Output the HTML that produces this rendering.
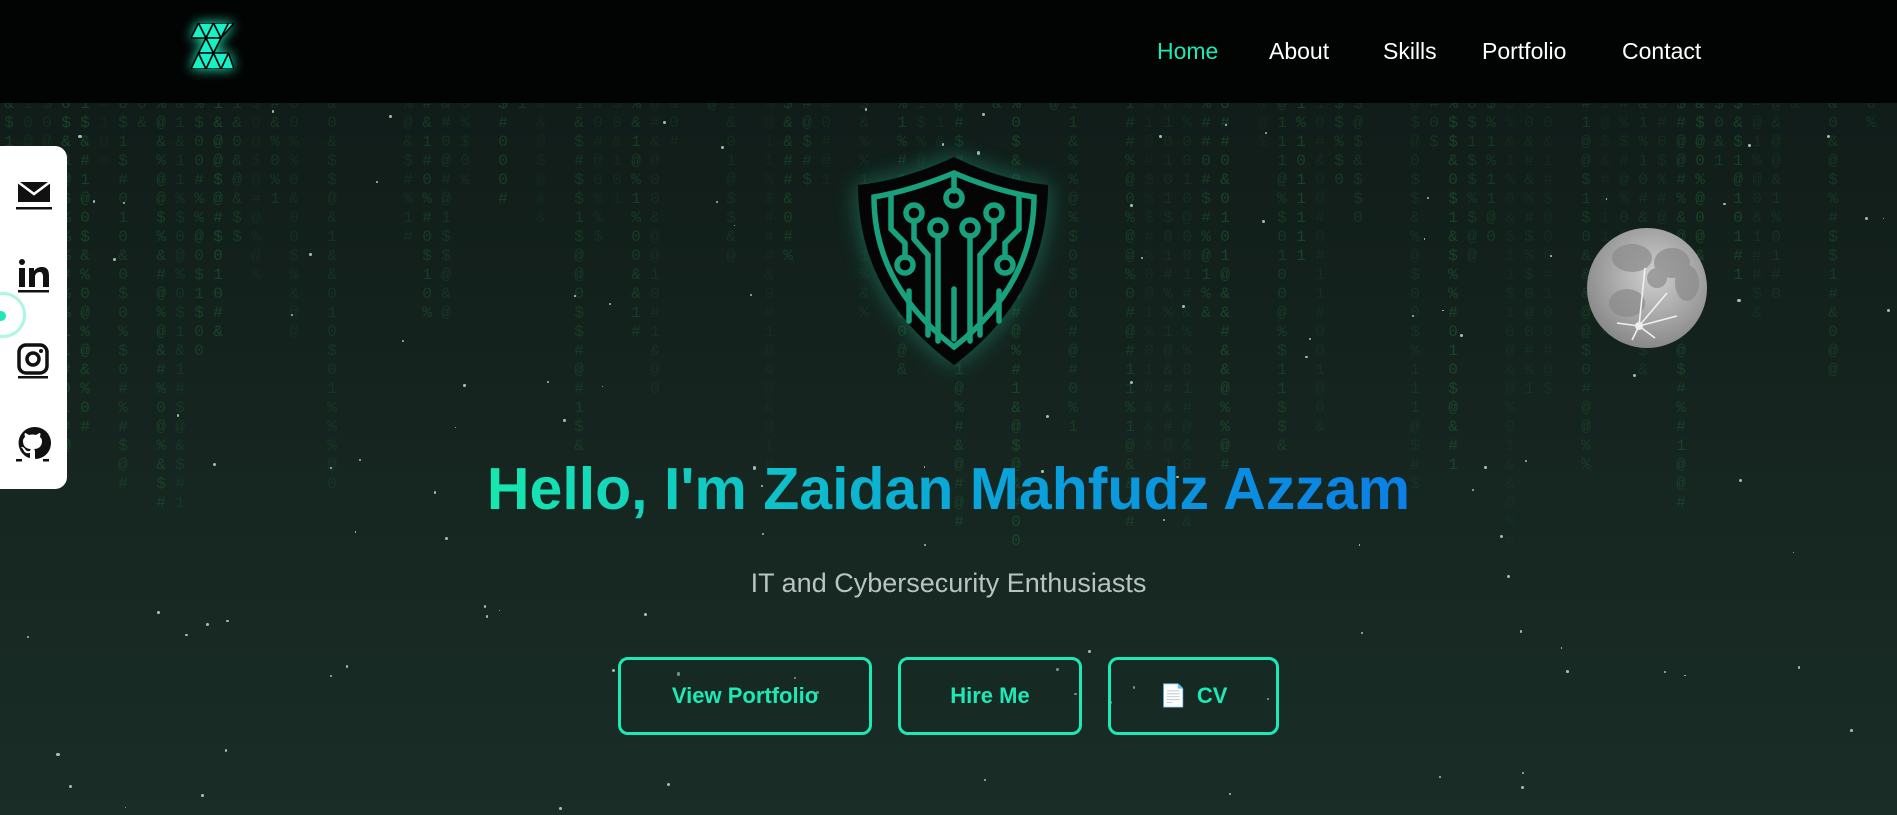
<!DOCTYPE html>
<html><head><meta charset="utf-8">
<style>
*{margin:0;padding:0;box-sizing:border-box}
html,body{width:1897px;height:815px;overflow:hidden}
body{background:linear-gradient(180deg,#0f1a17 0%,#15241f 50%,#1a2d27 100%);font-family:"Liberation Sans",sans-serif;position:relative}
#mx{position:absolute;left:0;top:0;width:1897px;height:815px;overflow:hidden;font-family:"Liberation Mono",monospace;font-size:16px;line-height:19px;color:#1d6e36}
.col{position:absolute;white-space:pre;width:14px;text-align:center}
.star{position:absolute;border-radius:50%;background:#dfe;opacity:.7}
nav{position:absolute;left:0;top:0;width:1897px;height:103px;background:#020303;z-index:5}
nav a{position:absolute;top:38px;font-size:23px;color:#fff;text-decoration:none}
.side{position:absolute;left:0;top:146px;width:67px;height:343px;background:#fff;border-radius:0 12px 12px 0;z-index:6}
.side svg{position:absolute;left:16px}
h1{position:absolute;left:0;width:1897px;top:455px;text-align:center;font-size:59px;font-weight:bold;z-index:3}
h1 span{background:linear-gradient(90deg,#17e8ae,#0aa8d8 50%,#0b7fe6);-webkit-background-clip:text;background-clip:text;color:transparent}
.sub{position:absolute;left:0;width:1897px;top:568px;text-align:center;font-size:27px;color:#b7c4bf;z-index:3}
.btn{position:absolute;top:657px;height:78px;border:3px solid #1de9b6;border-radius:10px;color:#1de9b6;font-weight:bold;font-size:22px;display:flex;align-items:center;justify-content:center;z-index:3;background:rgba(20,40,34,.3)}
</style></head><body>
<div id="mx"></div>
<nav>
<svg style="position:absolute;left:191px;top:23px;filter:drop-shadow(0 0 6px #1de9b6)" width="43" height="46" viewBox="0 0 43 46">
<g fill="#16f2c8" stroke="#020303" stroke-width="1.6" stroke-linejoin="round">
<polygon points="0,15 7.5,0 15,15"/><polygon points="7.5,0 22.5,0 15,15"/><polygon points="15,15 22.5,0 30,15"/><polygon points="22.5,0 37.5,0 30,15"/><polygon points="30,15 37.5,0 43,0"/>
<polygon points="7.5,30 15,15 22.5,30"/><polygon points="15,15 30,15 22.5,30"/>
<polygon points="0,46 7.5,30 15,46"/><polygon points="7.5,30 22.5,30 15,46"/><polygon points="15,46 22.5,30 30,46"/><polygon points="22.5,30 37.5,30 30,46"/><polygon points="30,46 37.5,30 43,46"/></g></svg>
<a style="left:1157px;color:#1de9b6">Home</a><a style="left:1269px">About</a><a style="left:1383px">Skills</a><a style="left:1482px">Portfolio</a><a style="left:1622px">Contact</a>
</nav>
<div class="side">
<svg style="top:32px" width="36" height="34" viewBox="0 0 36 34"><path d="M2 4h32v20H2z" fill="#111"/><path d="M2 4l16 12L34 4" fill="none" stroke="#fff" stroke-width="2.5"/><rect x="0" y="29" width="36" height="2.5" fill="#111"/></svg>
<svg style="top:112px" width="36" height="36" viewBox="0 0 36 36"><circle cx="6" cy="4" r="3" fill="#111"/><rect x="3" y="10" width="6" height="19" fill="#111"/><path d="M13 10h5v3c2-3 5-4 8-4 5 0 7 3 7 9v11h-6V19c0-3-1-5-3-5-3 0-5 2-5 5v10h-6z" fill="#111"/><rect x="2" y="32" width="31" height="2.5" fill="#111"/></svg>
<svg style="top:197px" width="36" height="36" viewBox="0 0 36 36"><rect x="3" y="2" width="28" height="28" rx="7" fill="none" stroke="#111" stroke-width="3.5"/><circle cx="17" cy="16" r="6" fill="none" stroke="#111" stroke-width="3.5"/><circle cx="25" cy="8" r="2" fill="#111"/><rect x="2" y="33" width="30" height="2.5" fill="#111"/></svg>
<svg style="top:280px" width="36" height="36" viewBox="0 0 36 36"><path d="M18 1a16 16 0 0 0-5 31c1 0 1-1 1-1v-4c-5 1-6-2-6-2-1-2-2-3-2-3-2-1 0-1 0-1 2 0 3 2 3 2 2 3 4 2 5 2 0-1 1-2 1-2-4 0-8-2-8-8 0-2 1-3 2-4 0-1-1-3 0-4 0 0 1 0 4 2a13 13 0 0 1 7 0c3-2 4-2 4-2 1 1 0 3 0 4 1 1 2 2 2 4 0 6-4 8-8 8 1 1 1 2 1 3v6s0 1 1 1A16 16 0 0 0 18 1z" fill="#111"/><rect x="0" y="33" width="6" height="2.5" fill="#111"/><rect x="27" y="33" width="6" height="2.5" fill="#111"/></svg>
</div>
<div style="position:absolute;left:-20px;top:292px;width:46px;height:46px;border-radius:50%;border:3px solid #aef5e4;z-index:7"></div>
<div style="position:absolute;left:-4px;top:311px;width:10px;height:10px;border-radius:50%;background:#1de9b6;z-index:7"></div>
<svg style="position:absolute;left:830px;top:135px;z-index:3" width="240" height="250" viewBox="0 0 240 250">
<defs><filter id="g" x="-30%" y="-30%" width="160%" height="160%"><feGaussianBlur stdDeviation="12"/></filter></defs>
<path d="M28 50 Q75 45 124 22 Q170 45 218 50 Q218 160 124 230 Q28 160 28 50z" fill="#1fa882" opacity=".55" filter="url(#g)"/>
<path d="M28 50 Q75 45 124 22 Q170 45 218 50 Q218 160 124 230 Q28 160 28 50z" fill="#050505"/>
<g fill="none" stroke="#19a07c" stroke-width="5.5" stroke-linecap="round">
<path d="M44 62 Q80 56 124 38 Q166 56 204 62 Q204 150 124 212 Q44 150 44 62z"/>
<path d="M124 38v18"/><circle cx="124" cy="63" r="8"/>
<circle cx="84" cy="78" r="8"/><path d="M84 86v18l14 16v80"/>
<circle cx="164" cy="78" r="8"/><path d="M164 86v18l-14 16v80"/>
<circle cx="108" cy="93" r="8"/><path d="M108 101v105"/>
<circle cx="140" cy="93" r="8"/><path d="M140 101v105"/>
<circle cx="75" cy="130" r="8"/><path d="M75 122v-14l-14-14v-32"/>
<circle cx="175" cy="130" r="8"/><path d="M175 122v-14l14-14v-32"/>
<path d="M79 156v30M124 154v50M169 156v30"/>
</g></svg>
<svg style="position:absolute;left:1587px;top:228px;z-index:3" width="120" height="120" viewBox="0 0 120 120">
<defs><radialGradient id="m" cx="55%" cy="40%" r="60%"><stop offset="0" stop-color="#d0d0d0"/><stop offset="1" stop-color="#8a8a8a"/></radialGradient></defs>
<circle cx="60" cy="60" r="60" fill="url(#m)"/>
<g fill="#8a8a8a" opacity=".7"><ellipse cx="45" cy="30" rx="20" ry="14"/><ellipse cx="85" cy="35" rx="18" ry="15"/><ellipse cx="100" cy="55" rx="12" ry="18"/><ellipse cx="40" cy="75" rx="18" ry="14"/><ellipse cx="70" cy="50" rx="10" ry="10"/></g>
<g stroke="#f0f0f0" stroke-width="1.6"><path d="M52 98L58 40M52 98L80 65M52 98L90 88M52 98L30 95M52 98L45 112M52 98L68 110"/></g>
<circle cx="52" cy="98" r="4" fill="#eee"/></svg>
<h1><span>Hello, I'm Zaidan Mahfudz Azzam</span></h1>
<div class="sub">IT and Cybersecurity Enthusiasts</div>
<div class="btn" style="left:618px;width:254px">View Portfolio</div>
<div class="btn" style="left:898px;width:184px">Hire Me</div>
<div class="btn" style="left:1108px;width:171px"><span style="color:#c8d0d4;font-size:22px;margin-right:10px">&#128196;</span>CV</div>
<script>
var mx=document.getElementById('mx'),ch="01$%&#@",s=7;
function r(){s=(s*9301+49297)%233280;return s/233280;}
for(var x=2;x<1897;x+=19){if(r()<0.25)continue;var top=103+Math.floor(r()*6)*19-19,len=6+Math.floor(r()*24),t="";
 for(var i=0;i<len;i++)t+=ch[Math.floor(r()*ch.length)]+"\n";
 var d=document.createElement('div');d.className='col';d.style.left=x+'px';d.style.top=top+'px';d.style.opacity=(0.12+r()*0.35).toFixed(2);d.textContent=t;mx.appendChild(d);}
for(var k=0;k<130;k++){var st=document.createElement('div');st.className='star';st.style.left=(r()*1897)+'px';st.style.top=(105+r()*710)+'px';var z=1.5+r()*1.8;st.style.width=st.style.height=z+'px';mx.appendChild(st);}
</script>
</body></html>
